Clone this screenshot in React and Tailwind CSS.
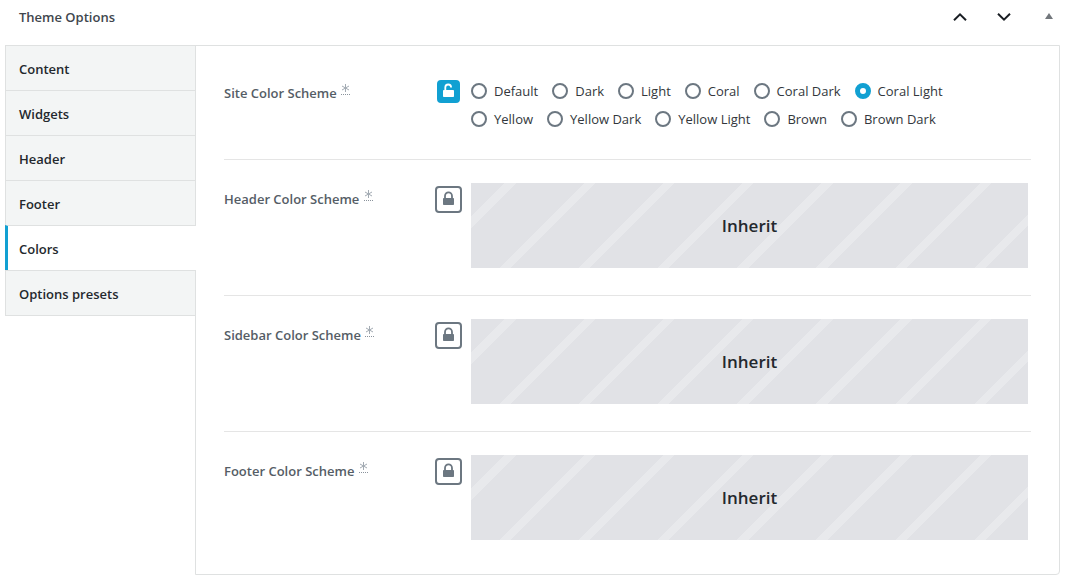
import React, { useState } from 'react';
import clsx from 'clsx';

const TABS = ['Content', 'Widgets', 'Header', 'Footer', 'Colors', 'Options presets'];

const SCHEMES = [
    'Default',
    'Dark',
    'Light',
    'Coral',
    'Coral Dark',
    'Coral Light',
    'Yellow',
    'Yellow Dark',
    'Yellow Light',
    'Brown',
    'Brown Dark',
];

const INHERITED = ['Header Color Scheme', 'Sidebar Color Scheme', 'Footer Color Scheme'];

const LockIcon = ({ open }) => (
    <svg viewBox="0 0 13 15" className="w-[13px] h-[15px]" aria-hidden="true">
        <rect x="1" y="7" width="11" height="7" rx="0.8" fill="currentColor" />
        <path
            d={open ? 'M3.3 7.5V4.4a2.9 2.9 0 0 1 5.8 0v.2' : 'M3 7.5V4.9a3.5 3.5 0 0 1 7 0v2.6'}
            fill="none"
            stroke="currentColor"
            strokeWidth="1.8"
        />
    </svg>
);

const LockButton = ({ open, label }) => (
    <button
        type="button"
        aria-label={label}
        className={clsx(
            'w-[27px] h-[27px] shrink-0 flex items-start justify-center pt-[3px] border-2',
            open
                ? 'mt-px rounded-md border-white bg-[#11a0d2] text-white'
                : 'mt-[3px] rounded border-[#6c7781] bg-white text-[#6c7781]'
        )}
    >
        <LockIcon open={open} />
    </button>
);

const Field = ({ title, open, children }) => (
    <div className="flex pt-[23px] pb-[27px] border-b border-[#e5e5e5] last:border-b-0">
        <div className="w-[211px] shrink-0 pt-1.5 leading-5 font-semibold text-[#555d66]">
            {title}{' '}
            <sup className="top-[-3px] ml-px inline-block border-b border-dotted border-[#8a939c] leading-[10px] font-normal text-[#a3abb3]">
                <svg viewBox="0 0 9 10" className="block w-[9px] h-2.5" aria-hidden="true">
                    <path d="M4.5 0v8M1 2l7 4M1 6l7-4" stroke="currentColor" strokeWidth="1" fill="none" />
                </svg>
            </sup>
        </div>
        <LockButton open={open} label={`${open ? 'Lock' : 'Unlock'} ${title}`} />
        <div className="flex-1 min-w-0 ml-[9px] mr-[3px]">{children}</div>
    </div>
);

const Inherit = () => (
    <div className="h-[85px] flex items-center justify-center text-[17px] font-semibold text-[#23282d] bg-[repeating-linear-gradient(135deg,#e1e2e6_0px,#e1e2e6_24px,#e8e9ec_24px,#e8e9ec_32px,#e1e2e6_32px,#e1e2e6_56px)]">
        Inherit
    </div>
);

const App = () => {
    const [tab, setTab] = useState('Colors');
    const [scheme, setScheme] = useState('Coral Light');

    return (
        <div className="bg-white pl-[5px] pr-1.5 pb-1.5 text-[13px] font-['Open_Sans',sans-serif]">
            <header className="h-[45px] flex items-start justify-between pl-3.5 pr-[5px]">
                <h2 className="pt-[7px] leading-5 font-semibold text-[#40464d]">Theme Options</h2>
                <div className="flex items-center pt-2 text-[#191e23]">
                    <button type="button" aria-label="Move up" className="w-11 h-[18px] flex items-center justify-center">
                        <svg viewBox="0 0 14 8" className="w-3.5 h-2" fill="none" stroke="currentColor" strokeWidth="2">
                            <path d="M1 7.2L7 1.4l6 5.8" />
                        </svg>
                    </button>
                    <button type="button" aria-label="Move down" className="w-11 h-[18px] flex items-center justify-center">
                        <svg viewBox="0 0 14 8" className="w-3.5 h-2" fill="none" stroke="currentColor" strokeWidth="2">
                            <path d="M1 .8l6 5.8L13 .8" />
                        </svg>
                    </button>
                    <button type="button" aria-label="Toggle panel" className="ml-[17px] w-3 h-[18px] flex items-center justify-center pb-0.5 text-[#72777c]">
                        <svg viewBox="0 0 8 6" className="w-2 h-1.5" fill="currentColor">
                            <path d="M4 0l4 6H0z" />
                        </svg>
                    </button>
                </div>
            </header>

            <div className="flex items-stretch">
                <nav className="relative z-10 w-[191px] shrink-0 -mr-px">
                    {TABS.map((t) => (
                        <button
                            key={t}
                            type="button"
                            onClick={() => setTab(t)}
                            className={clsx(
                                'block w-full h-[46px] -mb-px pt-1 text-left font-semibold text-[#23282d] border-y border-[#dfe1e1]',
                                t === tab
                                    ? 'bg-white border-l-3 border-l-[#11a0d2] pl-[11px]'
                                    : 'bg-[#f3f5f5] border-x pl-[13px]'
                            )}
                        >
                            {t}
                        </button>
                    ))}
                </nav>

                <section className="flex-1 min-w-0 border border-[#dfe1e1] rounded-br px-7 pt-2 pb-[7px]">
                    <Field title="Site Color Scheme" open>
                        <div className="flex flex-wrap gap-x-3.5 gap-y-px pr-10">
                            {SCHEMES.map((s) => (
                                <label key={s} className="h-[27px] flex items-center gap-[7px] text-[#32373c]">
                                    <input
                                        type="radio"
                                        name="scheme"
                                        checked={s === scheme}
                                        onChange={() => setScheme(s)}
                                        className="appearance-none w-4 h-4 rounded-full border-2 border-[#6c7781] bg-white checked:border-5 checked:border-[#11a0d2]"
                                    />
                                    <span className="pt-0.5">{s}</span>
                                </label>
                            ))}
                        </div>
                    </Field>
                    {INHERITED.map((title) => (
                        <Field key={title} title={title}>
                            <Inherit />
                        </Field>
                    ))}
                </section>
            </div>
        </div>
    );
};

export default App;
